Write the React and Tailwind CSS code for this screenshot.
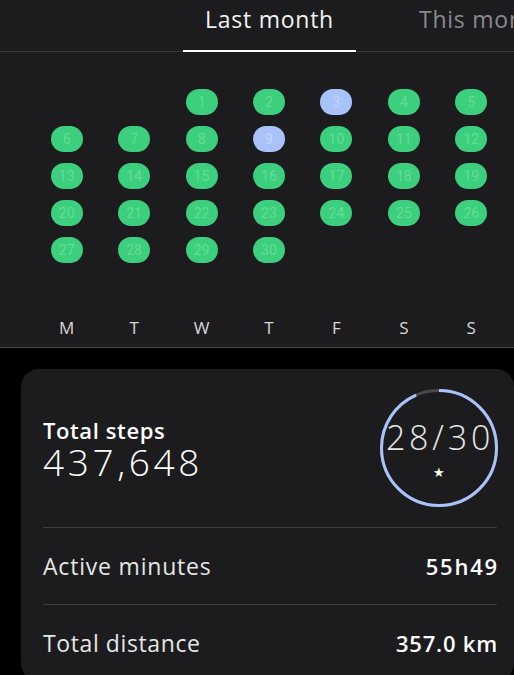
import React from "react";

const GREEN = "bg-[#3ccf7d] text-[#66dc98]";
const BLUE = "bg-[#a9c3fa] text-[#c3d5fc]";

const cells = [
  null, null, 1, 2, 3, 4, 5,
  6, 7, 8, 9, 10, 11, 12,
  13, 14, 15, 16, 17, 18, 19,
  20, 21, 22, 23, 24, 25, 26,
  27, 28, 29, 30, null, null, null,
];
const blue = new Set([3, 9]);

function Ring() {
  const r = 57.5;
  const c = 2 * Math.PI * r;
  const p = (28 / 30) * c;
  return (
    <div className="relative w-[118px] h-[118px] shrink-0">
      <svg width="118" height="118" viewBox="0 0 118 118" className="absolute inset-0">
        <circle cx="59" cy="59" r={r} fill="none" stroke="#48484b" strokeWidth="3" />
        <circle
          cx="59"
          cy="59"
          r={r}
          fill="none"
          stroke="#a9c3fa"
          strokeWidth="3"
          strokeDasharray={`${p} ${c}`}
          transform="rotate(-90 59 59)"
        />
      </svg>
      <div className="absolute inset-0 flex flex-col items-center justify-center">
        <div className="text-[34px] font-light leading-none text-[#e6e6e6] mt-[2px] tracking-[3.8px] pl-[2px]">28/30</div>
        <div className="text-[13px] leading-none text-white mt-[12px]">★</div>
      </div>
    </div>
  );
}

export default function App() {
  return (
    <div
      className="w-[514px] h-[675px] bg-black overflow-hidden text-white"
      style={{ fontFamily: "'Open Sans', 'Noto Sans', sans-serif" }}
    >
      <div className="bg-[#1c1c1e] h-[348px] border-b border-[#4a4a4c] flex flex-col">
        <div className="h-[52px] border-b border-[#37373a] flex items-end pl-[183px] gap-[41px] whitespace-nowrap">
          <div className="shrink-0 w-[173px] h-[52px] flex items-center justify-center border-b-2 border-white mb-[-1px] text-[23px] tracking-[0.75px] text-[#f2f2f2] pb-[12px]">
            Last month
          </div>
          <div className="shrink-0 px-[22px] h-[52px] flex items-center text-[23px] tracking-[0.75px] text-[#8a8a8c] pb-[12px]">
            This month
          </div>
        </div>
        <div className="grid grid-cols-7 w-[472px] ml-[33px] mt-[37px] gap-y-[11px]">
          {cells.map((d, i) => (
            <div key={i} className="flex justify-center h-[26px]">
              {d !== null && (
                <div
                  className={`w-[32px] h-[26px] rounded-full flex items-center justify-center text-[14px] leading-none ${
                    blue.has(d) ? BLUE : GREEN
                  }`}
                  style={{ fontFamily: "Roboto, sans-serif" }}
                >
                  {d}
                </div>
              )}
            </div>
          ))}
        </div>
        <div className="grid grid-cols-7 w-[472px] ml-[33px] mt-[52px] text-[17px] text-[#d8d8d8]">
          {["M", "T", "W", "T", "F", "S", "S"].map((d, i) => (
            <div key={i} className="text-center">{d}</div>
          ))}
        </div>
      </div>
      <div className="ml-[21px] mt-[21px] w-[493px] rounded-[18px] bg-[#1c1c1e] pl-[22px] pr-[17px]">
        <div className="h-[158px] flex items-center justify-between">
          <div className="flex flex-col mt-[2px]">
            <div className="text-[22px] font-semibold leading-[26px] tracking-[0.6px] text-white">Total steps</div>
            <div className="text-[37px] font-light leading-[38px] tracking-[3.6px] text-white">437,648</div>
          </div>
          <div className="mr-[-1px]">
            <Ring />
          </div>
        </div>
        <div className="border-t border-[#3d3d40] h-[77px] flex items-center justify-between">
          <span className="text-[23px] tracking-[0.8px] text-[#e6e6e6]">Active minutes</span>
          <span className="text-[22px] font-semibold tracking-[1.8px] mr-[-2px] text-white">55h49</span>
        </div>
        <div className="border-t border-[#3d3d40] h-[77px] flex items-center justify-between">
          <span className="text-[23px] tracking-[0.6px] text-[#e6e6e6]">Total distance</span>
          <span className="text-[22px] font-semibold tracking-[0.8px] mr-[-1px] text-white">357.0 km</span>
        </div>
      </div>
    </div>
  );
}
